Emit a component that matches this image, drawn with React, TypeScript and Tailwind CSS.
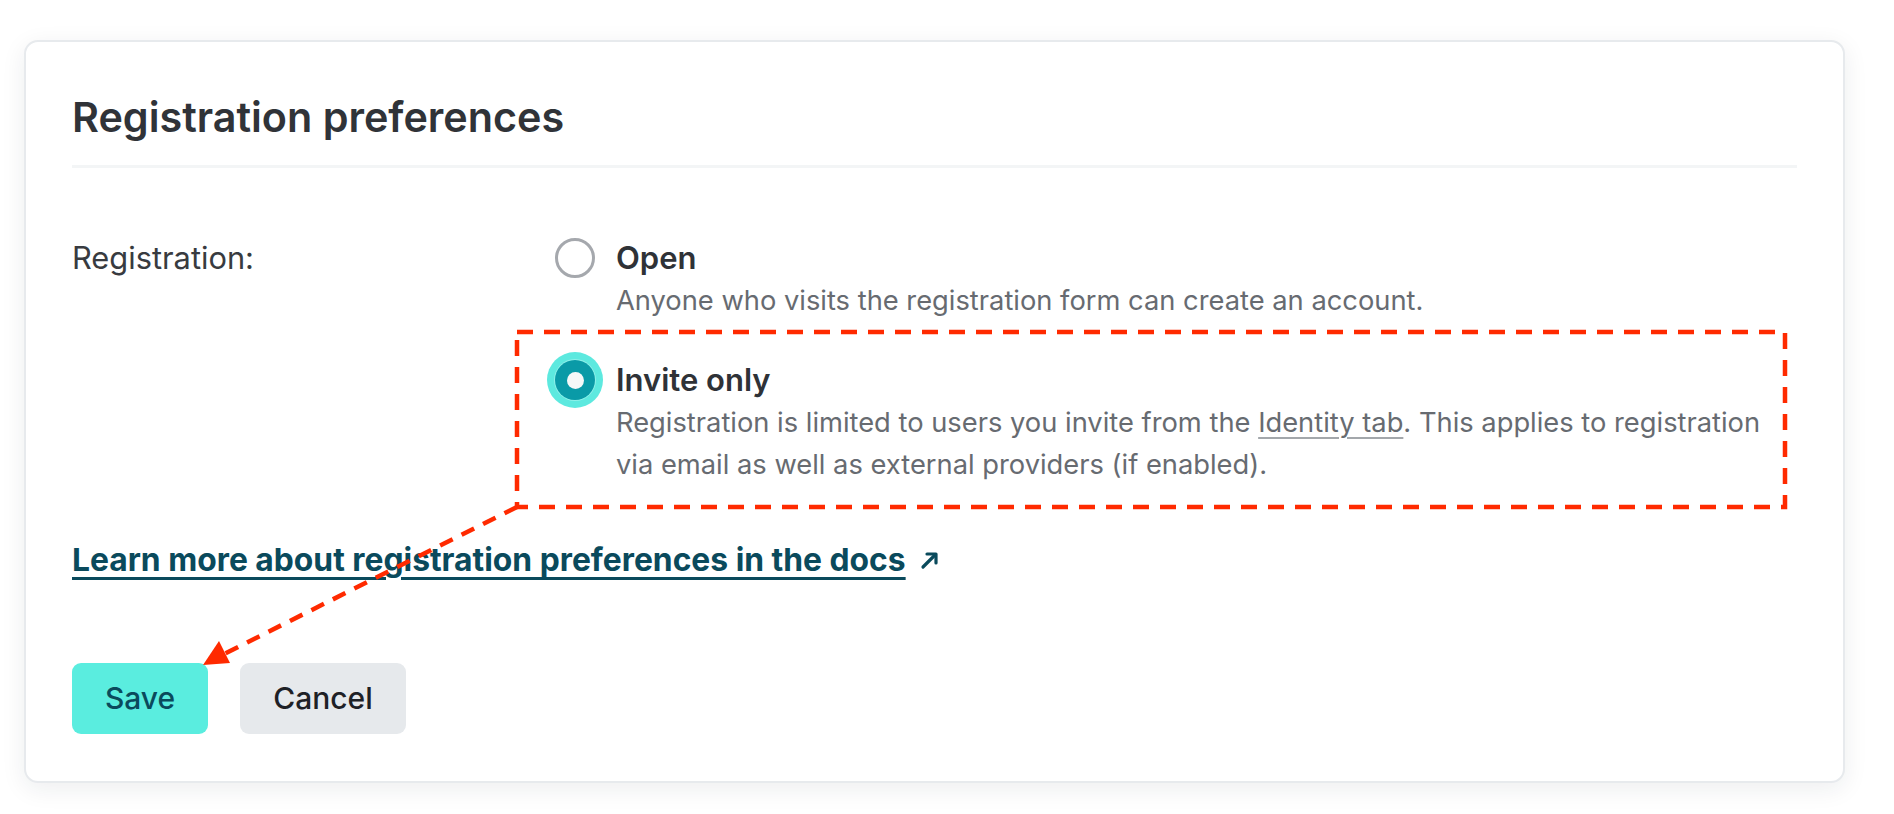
import React from 'react'

const font = { fontFamily: 'Inter, "Noto Sans", "Liberation Sans", sans-serif' }

function Radio({ checked }: { checked?: boolean }) {
  if (checked) {
    return (
      <span className="flex h-[56px] w-[56px] shrink-0 items-center justify-center rounded-full bg-[#5de9df] -mx-[8px] -my-[6px]">
        <span className="flex h-[40px] w-[40px] items-center justify-center rounded-full bg-[#0a9aa7] ring-1 ring-[#8ef0e9]">
          <span className="h-[17px] w-[17px] rounded-full bg-[#f5f8f8]" />
        </span>
      </span>
    )
  }
  return <span className="h-[40px] w-[40px] shrink-0 rounded-full border-[3px] border-[#a5a8ad] bg-white" />
}

function Option({ title, checked, children }: { title: string; checked?: boolean; children: React.ReactNode }) {
  return (
    <div className="flex gap-[21px]">
      <div className="flex h-[44px] items-center">
        <Radio checked={checked} />
      </div>
      <div>
        <div className="text-[31px] font-semibold leading-[44px] text-[#2f3237]">{title}</div>
        <div className="text-[27.3px] leading-[42px] text-[#676b71]">{children}</div>
      </div>
    </div>
  )
}

function ExternalArrow() {
  return (
    <svg width="22" height="22" viewBox="0 0 22 22" fill="none" className="ml-[13px] inline-block">
      <path d="M4 18 L16 6" stroke="#0a4a5c" strokeWidth="3.2" strokeLinecap="round" />
      <path d="M8 5 H17 V14" stroke="#0a4a5c" strokeWidth="3.2" strokeLinecap="round" strokeLinejoin="round" />
    </svg>
  )
}

// red annotation drawn over the card
function Annotation() {
  return (
    <svg className="pointer-events-none absolute left-0 top-0" width="1894" height="814" viewBox="0 0 1894 814">
      <rect x="517" y="332" width="1268" height="175" fill="none" stroke="#ff2a00" strokeWidth="4.5" strokeDasharray="16 11" />
      <path d="M517 507 L222 655" stroke="#ff2a00" strokeWidth="4.5" strokeDasharray="14 10" fill="none" />
      <polygon points="203,665 219,641 230,663" fill="#ff2a00" />
    </svg>
  )
}

export default function App() {
  return (
    <div className="relative h-[814px] w-[1894px] overflow-hidden bg-white" style={font}>
      <div className="ml-[24px] mt-[40px] w-[1821px] rounded-[14px] border-2 border-[#e7eaed] bg-white px-[46px] pb-[47px] pt-[46px] shadow-[0_6px_24px_rgba(30,40,50,0.08)]">
        <h1 className="border-b-[3px] border-[#f3f5f6] pb-[19px] text-[41.3px] font-semibold leading-[58px] text-[#303338]">
          Registration preferences
        </h1>

        <div className="mt-[68px] flex">
          <div className="w-[483px] shrink-0 text-[30.8px] leading-[44px] text-[#383b40]">Registration:</div>
          <div className="flex flex-col gap-[36px]">
            <Option title="Open">Anyone who visits the registration form can create an account.</Option>
            <Option title="Invite only" checked>
              Registration is limited to users you invite from the{' '}
              <span className="underline decoration-[#a3a7ab] decoration-2 underline-offset-[5px]">Identity tab</span>. This applies to registration
              <br />
              via email as well as external providers (if enabled).
            </Option>
          </div>
        </div>

        <div className="mt-[53px] flex items-center text-[31.8px] font-bold leading-[42px] text-[#0a4a5c]">
          <a href="#" className="underline decoration-[3px] underline-offset-[6px]">
            Learn more about registration preferences in the docs
          </a>
          <ExternalArrow />
        </div>

        <div className="mt-[82px] flex gap-[32px]">
          <button className="h-[71px] w-[136px] rounded-[9px] bg-[#5aeddf] text-[30px] font-medium text-[#0a4a5c]">Save</button>
          <button className="h-[71px] w-[166px] rounded-[9px] bg-[#e6e9ec] text-[30px] font-medium text-[#1e2126]">Cancel</button>
        </div>
      </div>
      <Annotation />
    </div>
  )
}
